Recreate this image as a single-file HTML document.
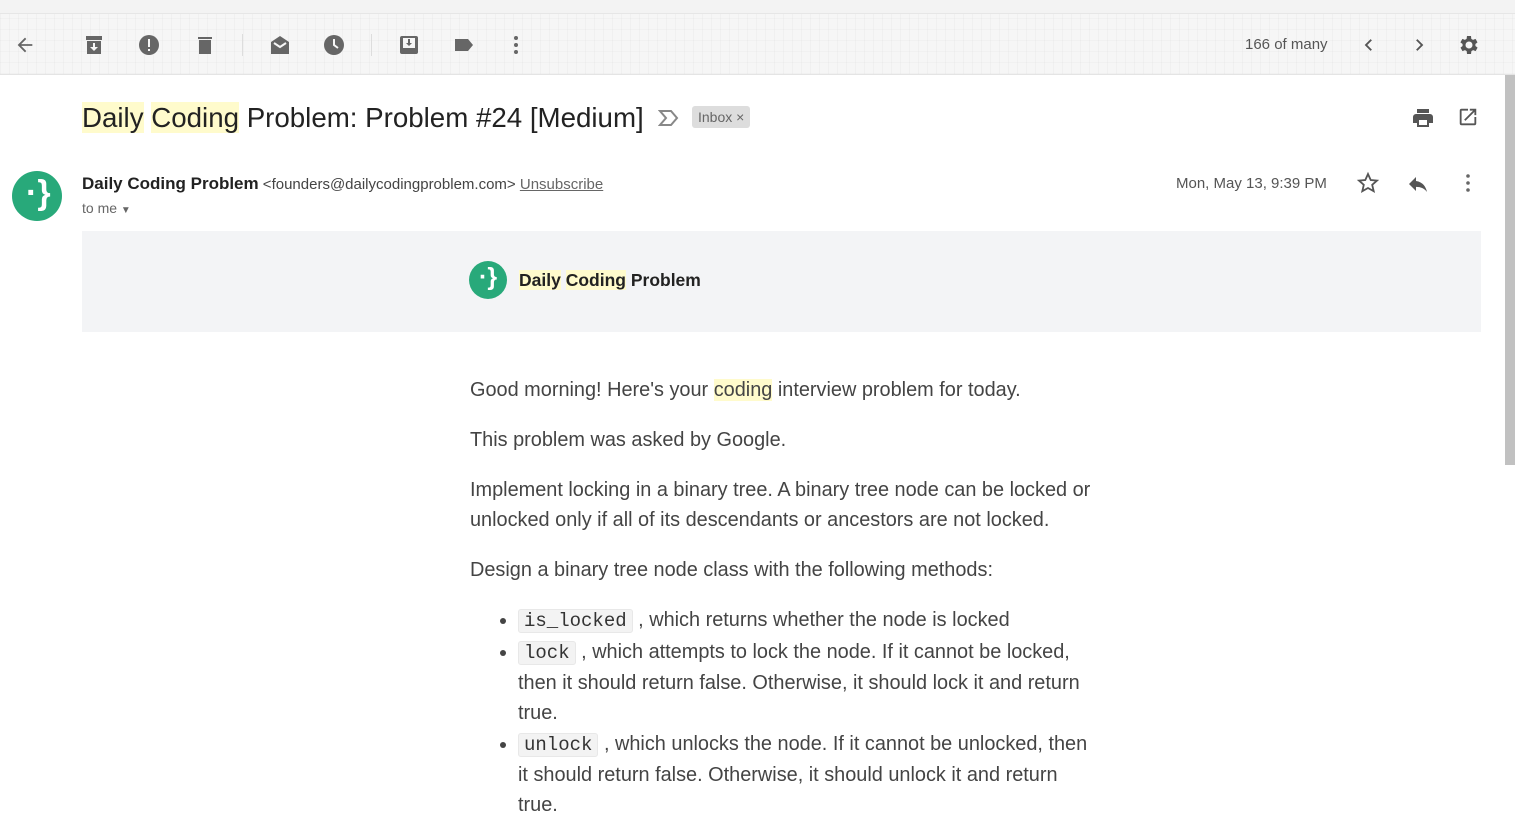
<!DOCTYPE html>
<html><head><meta charset="utf-8"><style>
*{margin:0;padding:0;box-sizing:border-box}
body{width:1515px;height:830px;overflow:hidden;background:#fff;font-family:"Liberation Sans",Arial,sans-serif;position:relative;color:#222}
.tb{position:absolute;left:0;top:0;width:1515px;height:75px;background:#f6f6f6;border-bottom:1px solid #e4e4e4;
background-image:repeating-linear-gradient(90deg,rgba(0,0,0,.025) 0 1px,transparent 1px 9px),repeating-linear-gradient(0deg,rgba(0,0,0,.02) 0 1px,transparent 1px 11px)}
.tb .top{position:absolute;left:0;top:0;width:100%;height:14px;border-bottom:1px solid #e6e6e6;background:#f3f3f3}
.ic{position:absolute}
.hl{background:#fffbcc}
.abs{position:absolute;white-space:nowrap}
.body{position:absolute;left:470px;top:375px;width:630px;font-size:19.9px;line-height:30px;color:#444}
.body p{margin-bottom:20px}
.body ul{margin-left:48px}
.body li{margin-bottom:1px}
code{font-family:"Liberation Mono",monospace;font-size:19px;background:#f3f3f3;border:1px solid #e8e8e8;border-radius:3px;padding:0 5px;color:#333}
.sb{position:absolute;left:1505px;top:75px;width:10px;height:390px;background:#c1c1c1}
</style></head><body>
<div class="tb"><div class="top"></div>
<svg class="ic" style="left:14px;top:34px" width="22" height="22" viewBox="0 0 24 24"><path d="M20 11H7.8l5.6-5.6L12 4l-8 8 8 8 1.4-1.4L7.8 13H20z" fill="#666"/></svg>
<svg class="ic" style="left:82px;top:33px" width="24" height="24" viewBox="0 0 24 24"><path d="M4 3h16v4H4zM5 8h14v13H5zm7 10l4-4h-3v-4h-2v4H8z" fill="#666"/></svg>
<svg class="ic" style="left:137px;top:33px" width="24" height="24" viewBox="0 0 24 24"><circle cx="12" cy="12" r="10" fill="#666"/><rect x="11" y="6" width="2" height="8" fill="#f6f6f6"/><rect x="11" y="16" width="2" height="2" fill="#f6f6f6"/></svg>
<svg class="ic" style="left:193px;top:33px" width="24" height="24" viewBox="0 0 24 24"><path d="M6 7h12v14H6zM5 4h14v2H5z" fill="#666"/></svg>
<div class="abs" style="left:242px;top:34px;width:1px;height:22px;background:#ddd"></div>
<svg class="ic" style="left:268px;top:33px" width="24" height="24" viewBox="0 0 24 24"><path d="M3 9l9-6 9 6v12H3z" fill="#666"/><path d="M6 10l6 4 6-4" stroke="#f6f6f6" stroke-width="2" fill="none"/></svg>
<svg class="ic" style="left:322px;top:33px" width="24" height="24" viewBox="0 0 24 24"><circle cx="12" cy="12" r="10" fill="#666"/><path d="M12 6v6l4 3" stroke="#f6f6f6" stroke-width="2" fill="none"/></svg>
<div class="abs" style="left:371px;top:34px;width:1px;height:22px;background:#ddd"></div>
<svg class="ic" style="left:397px;top:33px" width="24" height="24" viewBox="0 0 24 24"><rect x="3" y="3" width="18" height="18" rx="2" fill="#666"/><rect x="6" y="5" width="12" height="10" fill="#f6f6f6"/><path d="M11 6h2v4h2l-3 3-3-3h2z" fill="#666"/></svg>
<svg class="ic" style="left:452px;top:33px" width="24" height="24" viewBox="0 0 24 24"><path d="M3 6h13l5 6-5 6H3z" fill="#666"/></svg>
<svg class="ic" style="left:504px;top:33px" width="24" height="24" viewBox="0 0 24 24"><circle cx="12" cy="5" r="2" fill="#666"/><circle cx="12" cy="12" r="2" fill="#666"/><circle cx="12" cy="19" r="2" fill="#666"/></svg>
<div class="abs" style="left:1245px;top:36px;font-size:15px;color:#555">166 of many</div>
<svg class="ic" style="left:1360px;top:36px" width="18" height="18" viewBox="0 0 24 24"><path d="M15 5l-7 7 7 7" stroke="#555" stroke-width="2.5" fill="none"/></svg>
<svg class="ic" style="left:1410px;top:36px" width="18" height="18" viewBox="0 0 24 24"><path d="M9 5l7 7-7 7" stroke="#555" stroke-width="2.5" fill="none"/></svg>
<svg class="ic" style="left:1457px;top:33px" width="24" height="24" viewBox="0 0 24 24"><path fill="#555" d="M19.4 13a7.5 7.5 0 000-2l2.1-1.6-2-3.5-2.5 1a7 7 0 00-1.7-1L15 3h-4l-.4 2.9a7 7 0 00-1.7 1l-2.5-1-2 3.5L6.6 11a7.5 7.5 0 000 2l-2.1 1.6 2 3.5 2.5-1a7 7 0 001.7 1L11 21h4l.4-2.9a7 7 0 001.7-1l2.5 1 2-3.5zM13 15.5a3.5 3.5 0 110-7 3.5 3.5 0 010 7z" transform="translate(-1 0)"/></svg>
</div>
<div class="sb"></div>

<div class="abs" style="left:82px;top:101px;font-size:27.7px;color:#222;line-height:34px"><span class="hl">Daily</span> <span class="hl">Coding</span> Problem: Problem #24 [Medium]</div>
<svg class="ic" style="left:658px;top:108px" width="22" height="20" viewBox="0 0 22 20"><path d="M2 3h11l6 7-6 7H2l6-7z" stroke="#888" stroke-width="2" fill="none"/></svg>
<div class="abs" style="left:692px;top:106px;height:22px;padding:0 6px;background:#ddd;border-radius:3px;font-size:14px;color:#666;line-height:22px">Inbox ×</div>
<svg class="ic" style="left:1411px;top:106px" width="24" height="24" viewBox="0 0 24 24"><path fill="#555" d="M19 8H5a3 3 0 00-3 3v6h4v4h12v-4h4v-6a3 3 0 00-3-3zm-3 11H8v-5h8zM18 3H6v4h12z"/></svg>
<svg class="ic" style="left:1457px;top:106px" width="22" height="22" viewBox="0 0 24 24"><path fill="#555" d="M19 19H5V5h7V3H5a2 2 0 00-2 2v14a2 2 0 002 2h14a2 2 0 002-2v-7h-2zM14 3v2h3.6l-9.8 9.8 1.4 1.4L19 6.4V10h2V3z"/></svg>

<div class="abs" style="left:12px;top:171px;width:50px;height:50px;border-radius:50%;background:#28a97a"></div>
<div class="abs" style="left:26px;top:174px;font-size:34px;color:#fff;font-weight:bold">·}</div>
<div class="abs" style="left:82px;top:174px;font-size:15px;color:#444"><b style="font-size:17px;color:#222">Daily Coding Problem</b> &lt;founders@dailycodingproblem.com&gt; <u style="color:#666">Unsubscribe</u></div>
<div class="abs" style="left:82px;top:200px;font-size:14px;color:#666">to me <span style="font-size:10px">▼</span></div>
<div class="abs" style="left:1176px;top:175px;font-size:15px;color:#555">Mon, May 13, 9:39 PM</div>
<svg class="ic" style="left:1356px;top:171px" width="24" height="24" viewBox="0 0 24 24"><path d="M12 3l2.7 6 6.3.6-4.8 4.2 1.5 6.4L12 17l-5.7 3.2 1.5-6.4L3 9.6 9.3 9z" stroke="#555" stroke-width="1.8" fill="none"/></svg>
<svg class="ic" style="left:1406px;top:172px" width="24" height="24" viewBox="0 0 24 24"><path fill="#555" d="M10 9V5l-7 7 7 7v-4.1c5 0 8.5 1.6 11 5.1-1-5-4-10-11-11z"/></svg>
<svg class="ic" style="left:1456px;top:171px" width="24" height="24" viewBox="0 0 24 24"><circle cx="12" cy="5" r="1.8" fill="#666"/><circle cx="12" cy="12" r="1.8" fill="#666"/><circle cx="12" cy="19" r="1.8" fill="#666"/></svg>

<div class="abs" style="left:82px;top:231px;width:1399px;height:101px;background:#f3f4f6"></div>
<div class="abs" style="left:469px;top:261px;width:38px;height:38px;border-radius:50%;background:#28a97a"></div>
<div class="abs" style="left:479px;top:263px;font-size:25px;color:#fff;font-weight:bold">·}</div>
<div class="abs" style="left:519px;top:270px;font-size:17.5px;font-weight:bold;color:#222"><span class="hl">Daily</span> <span class="hl">Coding</span> Problem</div>

<div class="body">
<p>Good morning! Here's your <span class="hl">coding</span> interview problem for today.</p>
<p>This problem was asked by Google.</p>
<p>Implement locking in a binary tree. A binary tree node can be locked or unlocked only if all of its descendants or ancestors are not locked.</p>
<p>Design a binary tree node class with the following methods:</p>
<ul>
<li><code>is_locked</code> , which returns whether the node is locked</li>
<li><code>lock</code> , which attempts to lock the node. If it cannot be locked,<br>then it should return false. Otherwise, it should lock it and return<br>true.</li>
<li><code>unlock</code> , which unlocks the node. If it cannot be unlocked, then<br>it should return false. Otherwise, it should unlock it and return<br>true.</li>
</ul>
</div>
</body></html>
